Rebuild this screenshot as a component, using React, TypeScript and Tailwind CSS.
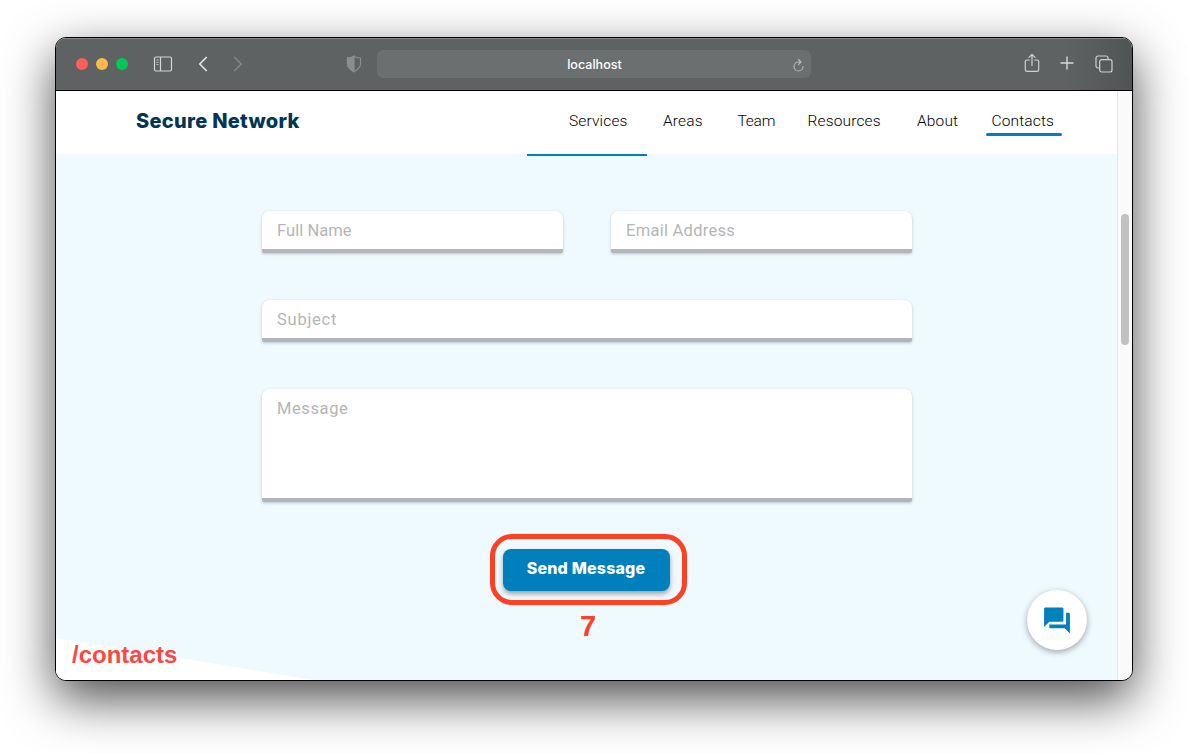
import { MdQuestionAnswer } from "react-icons/md";

const links = [
  { label: "Services", width: "w-[94px]" },
  { label: "Areas", width: "w-[74.5px]" },
  { label: "Team", width: "w-[70px] tracking-[-0.2px]" },
  { label: "Resources", width: "w-[109.5px]" },
  { label: "About", width: "w-[74.5px]" },
];

function Toolbar() {
  return (
    <div className="flex h-[53px] shrink-0 items-center border-b border-black bg-[linear-gradient(90deg,#5e6262_0%,#5e6262_94%,#505454_100%)] shadow-[inset_0_1px_0_#858989]">
      <div className="ml-5 flex gap-2">
        <span className="size-3 rounded-full bg-[#ff5f57]" />
        <span className="size-3 rounded-full bg-[#ffb946]" />
        <span className="size-3 rounded-full bg-[#00c853]" />
      </div>
      <svg className="ml-[25px]" width="20" height="16" viewBox="0 0 20 16" fill="none" stroke="#d5d6d6" strokeWidth="1.2">
        <rect x="1.5" y="1" width="17" height="14" rx="1.5" />
        <path d="M7.500 1v14" />
        <path d="M3.300 4h2.400M3.300 6.300h2.400M3.300 8.600h2.400" strokeWidth="1" opacity="0.8" />
      </svg>
      <svg className="ml-[25px]" width="10" height="16" viewBox="0 0 10 16" fill="none" stroke="#e3e4e4" strokeWidth="1.7" strokeLinecap="round" strokeLinejoin="round">
        <path d="M8.2 1.5 1.8 8l6.4 6.5" />
      </svg>
      <svg className="ml-[25px]" width="10" height="16" viewBox="0 0 10 16" fill="none" stroke="#858888" strokeWidth="1.7" strokeLinecap="round" strokeLinejoin="round">
        <path d="m1.8 1.5 6.4 6.5-6.4 6.5" />
      </svg>
      <svg className="ml-[103px]" width="16" height="18" viewBox="0 0 16 18" fill="none" stroke="#8b8e8e" strokeWidth="1.2">
        <path d="M8 1.2C6 2.5 3.8 2.9 1.5 3v6.3c0 3.6 3.2 5.7 6.5 7.4 3.300-1.700 6.500-3.800 6.500-7.400V3C12.200 2.900 10 2.500 8 1.200Z" />
        <path d="M8 1.200C6 2.500 3.800 2.900 1.500 3v6.300c0 3.600 3.200 5.700 6.500 7.400Z" fill="#8b8e8e" />
      </svg>
      <div className="ml-[15px] flex h-7 w-[434px] items-center rounded-md bg-[#6b6f6f] pr-[5px]">
        <span className="flex-1 pt-0.5 pl-[19px] text-center font-['Inter',sans-serif] text-[12.5px] font-medium tracking-[0.03px] text-white">localhost</span>
        <svg className="mt-0.5" width="13" height="14" viewBox="0 0 13 14" fill="none" stroke="#b5b7b7" strokeWidth="1.2" strokeLinecap="round" strokeLinejoin="round">
          <path d="M8 4H5.500a4.500 4.500 0 1 0 4.500 4.500M5.500 1.500 8 4 5.500 6.500" />
        </svg>
      </div>
      <svg className="mb-0.5 ml-[213px]" width="16" height="20" viewBox="0 0 16 20" fill="none" stroke="#d0d2d2" strokeWidth="1.2" strokeLinecap="round" strokeLinejoin="round">
        <path d="M5.300 7H3a1.700 1.700 0 0 0-1.700 1.700v8A1.700 1.700 0 0 0 3 18.400h10a1.700 1.700 0 0 0 1.700-1.700v-8A1.700 1.700 0 0 0 13 7h-2.300M8 12.500V1.500M5 4.300l3-3 3 3" />
      </svg>
      <svg className="mb-0.5 ml-5" width="14" height="14" viewBox="0 0 14 14" fill="none" stroke="#d8dada" strokeWidth="1.400" strokeLinecap="round">
        <path d="M7 1v12M1 7h12" />
      </svg>
      <svg className="mb-px ml-[21px]" width="18" height="18" viewBox="0 0 18 18" fill="none" stroke="#d0d2d2" strokeWidth="1.200" strokeLinejoin="round">
        <rect x="4.700" y="4.700" width="12.300" height="12.300" rx="2" />
        <path d="M4.700 13H3a2 2 0 0 1-2-2V3a2 2 0 0 1 2-2h8a2 2 0 0 1 2 2v1.700" />
      </svg>
    </div>
  );
}

function Header() {
  return (
    <header className="flex h-[63px] shrink-0 items-center justify-between bg-white pr-[55px] pl-20">
      <h1 className="pb-1 font-['Inter',sans-serif] text-[20px] font-extrabold tracking-[0.3px] text-[#003554]">Secure Network</h1>
      <nav className="flex items-center font-['Roboto',sans-serif] text-[15.5px] leading-5 font-light tracking-[0.15px] text-black">
        {links.map(({ label, width }) => (
          <a key={label} className={`pb-[3px] ${width}`}>{label}</a>
        ))}
        <a className="relative w-[70.5px] pb-[3px]">
          Contacts
          <span className="absolute top-[22px] -left-1.5 h-[3px] w-[76px] rounded-full bg-[#0080bd]" />
        </a>
      </nav>
    </header>
  );
}

const field =
  "block w-full resize-none rounded-t-lg rounded-b-[2px] border-b-4 border-[#b5b5b5] bg-white bg-clip-padding px-[15px] font-['Roboto',sans-serif] text-[16.5px] shadow-[0_1px_3px_rgba(0,40,70,0.25)] outline-none placeholder:text-[#b5b5b5]";

function ContactForm() {
  return (
    <form className="ml-[206px] w-[650px] pt-[55px]">
      <div className="mb-[47px] grid grid-cols-2 gap-12">
        <input className={`${field} h-[42px] tracking-[0.05px]`} placeholder="Full Name" />
        <input className={`${field} h-[42px] tracking-[0.27px]`} placeholder="Email Address" />
      </div>
      <input className={`${field} mb-[47px] h-[42px] tracking-[0.75px]`} placeholder="Subject" />
      <textarea className={`${field} h-[113px] pt-2 tracking-[0.6px]`} placeholder="Message" />
      <div className="mt-8 ml-[228px] flex h-[71px] w-[197px] items-center justify-center rounded-[22px] border-[5px] border-[#ff4023] pr-1">
        <button type="button" className="mr-px h-[42px] w-[167px] rounded-lg bg-[#007fbd] pb-1 font-['Inter',sans-serif] text-[16px] font-extrabold tracking-[0.2px] text-white shadow-[0_3px_5px_rgba(0,0,0,0.35)]">
          Send Message
        </button>
      </div>
      <div className="ml-[228px] w-[196px] pt-1 text-center font-['Liberation_Sans',sans-serif] text-[29px] leading-[34px] font-bold text-[#ff4023]">7</div>
    </form>
  );
}

export default function App() {
  return (
    <div className="h-[754px] w-[1188px] overflow-hidden bg-white pt-[37px] pl-[55px]">
      <div className="flex h-[644px] w-[1078px] flex-col overflow-hidden rounded-[11px] border border-black bg-white shadow-[0_18px_50px_rgba(0,0,0,0.7)]">
        <Toolbar />
        <div className="flex min-h-0 flex-1">
          <div className="flex w-[1061px] flex-col">
            <Header />
            <main className="relative flex-1 overflow-hidden bg-[#eefaff]">
              <div className="ml-[471px] h-0.5 w-[120px] bg-[#0080bd]" />
              <ContactForm />
              <svg className="absolute bottom-0 left-0" width="258" height="42" viewBox="0 0 258 42">
                <path d="M0 0 258 42H0Z" fill="#fff" />
              </svg>
              <span className="absolute bottom-[11px] left-4 font-['Liberation_Sans',sans-serif] text-[24px] leading-7 font-bold text-[#ff453f]">/contacts</span>
              <button type="button" aria-label="Chat" className="absolute right-[30px] bottom-[30px] flex size-[60px] items-center justify-center rounded-full bg-white shadow-[0_2px_6px_rgba(0,0,0,0.35)]">
                <MdQuestionAnswer className="size-[31px] -translate-x-[0.5px] text-[#0080bd]" />
              </button>
            </main>
          </div>
          <div className="flex w-[15px] justify-center border-l border-[#e6e6e6] bg-[#fafafa] pt-[123px]">
            <div className="h-[131px] w-2 rounded-full bg-[#c1c1c1]" />
          </div>
        </div>
      </div>
    </div>
  );
}
